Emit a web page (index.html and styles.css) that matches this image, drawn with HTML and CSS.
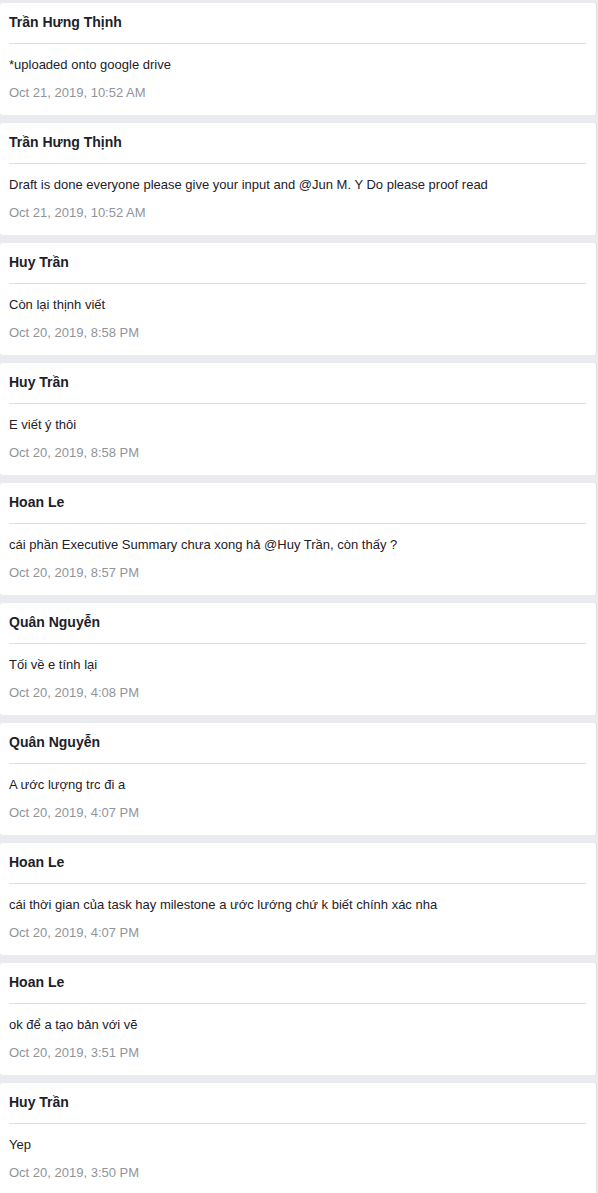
FILE: index.html
```html
<!DOCTYPE html>
<html>
<head>
<meta charset="utf-8">
<link rel="stylesheet" href="styles.css">
</head>
<body>
<div class="feed">
  <div class="card"><div class="head">Trần Hưng Thịnh</div><div class="body"><div class="msg">*uploaded onto google drive</div><div class="date">Oct 21, 2019, 10:52 AM</div></div></div>
  <div class="card"><div class="head">Trần Hưng Thịnh</div><div class="body"><div class="msg">Draft is done everyone please give your input and @Jun M. Y Do please proof read</div><div class="date">Oct 21, 2019, 10:52 AM</div></div></div>
  <div class="card"><div class="head">Huy Trần</div><div class="body"><div class="msg">Còn lại thịnh viết</div><div class="date">Oct 20, 2019, 8:58 PM</div></div></div>
  <div class="card"><div class="head">Huy Trần</div><div class="body"><div class="msg">E viết ý thôi</div><div class="date">Oct 20, 2019, 8:58 PM</div></div></div>
  <div class="card"><div class="head">Hoan Le</div><div class="body"><div class="msg">cái phần Executive Summary chưa xong hả @Huy Trần, còn thấy ?</div><div class="date">Oct 20, 2019, 8:57 PM</div></div></div>
  <div class="card"><div class="head">Quân Nguyễn</div><div class="body"><div class="msg">Tối về e tính lại</div><div class="date">Oct 20, 2019, 4:08 PM</div></div></div>
  <div class="card"><div class="head">Quân Nguyễn</div><div class="body"><div class="msg">A ước lượng trc đi a</div><div class="date">Oct 20, 2019, 4:07 PM</div></div></div>
  <div class="card"><div class="head">Hoan Le</div><div class="body"><div class="msg">cái thời gian của task hay milestone a ước lướng chứ k biết chính xác nha</div><div class="date">Oct 20, 2019, 4:07 PM</div></div></div>
  <div class="card"><div class="head">Hoan Le</div><div class="body"><div class="msg">ok để a tạo bản với vẽ</div><div class="date">Oct 20, 2019, 3:51 PM</div></div></div>
  <div class="card"><div class="head">Huy Trần</div><div class="body"><div class="msg">Yep</div><div class="date">Oct 20, 2019, 3:50 PM</div></div></div>
</div>
</body>
</html>
```

FILE: styles.css
```css
html, body {
  margin: 0;
  padding: 0;
  background: #e9ebee;
}
body {
  font-family: "Liberation Sans", Arial, sans-serif;
  color: #1d2129;
}
.feed {
  display: flex;
  flex-direction: column;
  gap: 8px;
  padding-top: 3px;
  width: 597px;
}
.card {
  background: #fff;
  border-radius: 3px;
  border-right: 1px solid #dddfe2;
  height: 112px;
  box-sizing: border-box;
  padding: 0 10px 0 9px;
}
.head {
  font-size: 14px;
  font-weight: bold;
  line-height: 16px;
  padding: 11px 0 13px;
  border-bottom: 1px solid #dddfe2;
}
.body {
  padding-top: 12px;
}
.msg {
  font-size: 13px;
  line-height: 18px;
}
.date {
  margin-top: 10px;
  font-size: 13px;
  line-height: 18px;
  color: #90949c;
}
```
